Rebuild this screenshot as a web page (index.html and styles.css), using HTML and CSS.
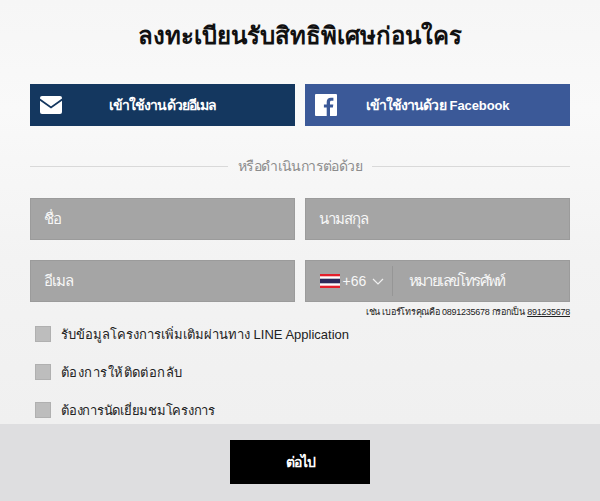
FILE: index.html
```html
<!DOCTYPE html>
<html lang="th">
<head>
  <meta charset="UTF-8" />
  <meta name="viewport" content="width=device-width, initial-scale=1.0"/>
  <title>ลงทะเบียน</title>
  <link rel="stylesheet" href="styles.css">
</head>
<body>

<div class="page">
  <div class="content">
    <h1>ลงทะเบียนรับสิทธิพิเศษก่อนใคร</h1>

    <!-- SOCIAL BUTTONS -->
    <div class="row">
      <a href="#" class="social email">
        <svg width="22" height="18" viewBox="0 0 22 18">
          <rect width="22" height="18" rx="2" fill="#fff"/>
          <path d="M-1 3 L11 11.500 L23 3" fill="none" stroke="#14375f" stroke-width="1.800"/>
        </svg>
        <span>เข้าใช้งานด้วยอีเมล</span>
      </a>
      <a href="#" class="social facebook">
        <svg width="22" height="22" viewBox="0 0 22 22">
          <rect width="22" height="22" rx="1" fill="#fff"/>
          <path d="M15 22 V13.600 H17.900 L18.300 10.400 H15 V8.300 C15 7.300 15.300 6.700 16.700 6.700 H18.400 V3.800 C18.100 3.800 17.100 3.700 15.900 3.700 C13.400 3.700 11.700 5.200 11.700 8 V10.400 H8.900 V13.600 H11.700 V22 Z" fill="#3b5998"/>
        </svg>
        <span>เข้าใช้งานด้วย <b class="latin">Facebook</b></span>
      </a>
    </div>

    <div class="divider"><span>หรือดำเนินการต่อด้วย</span></div>

    <!-- FORM -->
    <div class="row">
      <div class="field">ชื่อ</div>
      <div class="field">นามสกุล</div>
    </div>
    <div class="row row-second">
      <div class="field">อีเมล</div>
      <div class="field phone">
        <div class="country">
          <svg width="20" height="14" viewBox="0 0 20 14">
            <rect width="20" height="14" fill="#fff"/>
            <rect width="20" height="2.300" fill="#e4202c"/>
            <rect y="4.700" width="20" height="4.600" fill="#2d2a5a"/>
            <rect y="11.700" width="20" height="2.300" fill="#e4202c"/>
          </svg>
          <span class="code">+66</span>
          <svg class="chevron" width="12" height="7" viewBox="0 0 12 7">
            <path d="M1 1 L6 6 L11 1" fill="none" stroke="#f0f0f0" stroke-width="1.200"/>
          </svg>
        </div>
        <span class="phone-label">หมายเลขโทรศัพท์</span>
      </div>
    </div>
    <p class="hint">เช่น เบอร์โทรคุณคือ 0891235678 กรอกเป็น <u>891235678</u></p>

    <!-- OPTIONS -->
    <label class="check"><span class="box"></span>รับข้อมูลโครงการเพิ่มเติมผ่านทาง LINE Application</label>
    <label class="check check-callback"><span class="box"></span>ต้องการให้ติดต่อกลับ</label>
    <label class="check check-visit"><span class="box"></span>ต้องการนัดเยี่ยมชมโครงการ</label>
  </div>

  <div class="footer">
    <button>ต่อไป</button>
  </div>
</div>

</body>
</html>
```

FILE: styles.css
```css
* {
  box-sizing: border-box;
}
body {
  margin: 0;
  font-family: "Liberation Sans", Arial, sans-serif;
  background: #f4f4f4;
}
.page {
  display: flex;
  flex-direction: column;
  height: 100vh;
  overflow: hidden;
}
.content {
  flex: 1;
  min-height: 0;
  overflow: hidden;
  padding: 0 30px;
  background: linear-gradient(#f6f6f6 0, #f9f9f9 110px, #f3f3f3 260px, #f0f0f0 100%);
}
h1 {
  margin: 0;
  height: 84px;
  padding-top: 19px;
  font-size: 24px;
  line-height: 34px;
  font-weight: bold;
  text-align: center;
  color: #111;
}
.row {
  display: flex;
  gap: 10px;
}
.row-second {
  margin-top: 20px;
}
.social {
  flex: 1;
  display: flex;
  align-items: center;
  height: 42px;
  padding-left: 10px;
  color: #fff;
  font-size: 14px;
  font-weight: bold;
  letter-spacing: -0.9px;
  word-spacing: 1px;
  text-decoration: none;
}
.social span {
  flex: 1;
  padding-right: 32px;
  text-align: center;
}
.social .latin {
  font-size: 13px;
  letter-spacing: -0.1px;
}
.email {
  background: #14375f;
}
.facebook {
  background: #3b5998;
}
.divider {
  display: flex;
  align-items: center;
  gap: 10px;
  margin: 30px 0 22px;
  height: 20px;
  font-size: 14px;
  letter-spacing: -0.6px;
  color: #8c8c8c;
}
.divider::before,
.divider::after {
  content: "";
  flex: 1;
  height: 1px;
  background: #d9d9d9;
}
.field {
  flex: 1;
  display: flex;
  align-items: center;
  height: 42px;
  padding-left: 13px;
  background: #a5a5a5;
  border: 1px solid #9b9b9b;
  color: #f7f7f7;
  font-size: 15px;
  letter-spacing: -1px;
}
.phone {
  padding-left: 14px;
}
.country {
  display: flex;
  align-items: center;
  height: 30px;
  width: 73px;
  border-right: 1px solid #969696;
}
.code {
  margin-left: 3px;
  font-size: 14px;
  letter-spacing: 0;
}
.chevron {
  margin-left: 6px;
}
.phone-label {
  margin-left: 16px;
  letter-spacing: -1.6px;
}
.hint {
  margin: 4px 0 0;
  height: 13px;
  font-size: 9px;
  line-height: 13px;
  letter-spacing: -0.25px;
  text-align: right;
  color: #222;
}
.check {
  display: flex;
  align-items: center;
  gap: 10px;
  height: 16px;
  margin: 7px 0 22px 5px;
  font-size: 13px;
  color: #222;
}
.check-callback {
  letter-spacing: 0.45px;
}
.check-visit {
  margin-top: 8px;
  letter-spacing: -0.25px;
}
.box {
  width: 16px;
  height: 16px;
  background: #bdbdbd;
  border: 1px solid #b0b0b0;
}
.footer {
  flex: none;
  display: flex;
  justify-content: center;
  align-items: flex-start;
  height: 77px;
  padding-top: 16px;
  background: #dedee0;
}
button {
  width: 140px;
  height: 44px;
  background: #000;
  color: #fff;
  border: none;
  font-family: inherit;
  font-size: 14px;
  font-weight: bold;
  letter-spacing: -1px;
  cursor: pointer;
}
```
